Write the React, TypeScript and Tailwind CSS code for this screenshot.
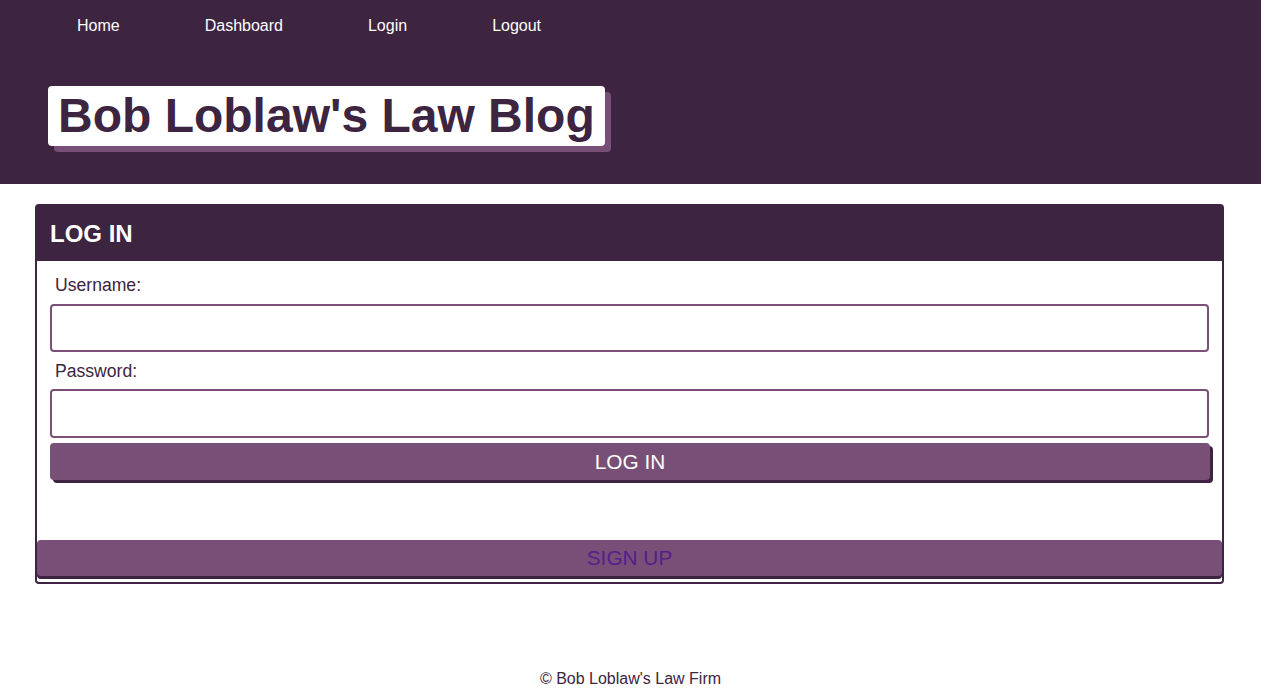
import { useState } from 'react';

export default function App() {
  const [username, setUsername] = useState('');
  const [password, setPassword] = useState('');

  return (
    <div className="min-h-screen bg-white flex flex-col font-['Liberation_Sans',Arial,sans-serif] text-[#3d2440]">
      <header className="bg-[#3d2440] h-[184px]">
        <nav className="flex gap-[85px] pl-[77px] pt-[17px] text-[16px] leading-[18px] text-white">
          <a href="#">Home</a>
          <a href="#">Dashboard</a>
          <a href="#">Login</a>
          <a href="#">Logout</a>
        </nav>
        <div className="pl-[48px] pt-[51px]">
          <h1 className="inline-block bg-white rounded-[4px] px-[10px] text-[48px] leading-[60px] font-bold text-[#3d2440] shadow-[6px_6px_0_#784f77]">
            Bob Loblaw's Law Blog
          </h1>
        </div>
      </header>

      <main className="mt-[20px] ml-[35px] mr-[37px] border-2 border-[#3d2440] rounded-[4px] pb-[6px]">
        <div className="bg-[#3d2440] h-[55px] flex items-center px-[13px]">
          <h2 className="text-[24px] font-bold text-white">LOG IN</h2>
        </div>
        <form className="px-[13px] pt-[14px] flex flex-col" onSubmit={(e) => e.preventDefault()}>
          <label className="ml-[5px] text-[17.6px] leading-[20px]">Username:</label>
          <input
            type="text"
            value={username}
            onChange={(e) => setUsername(e.target.value)}
            className="mt-[9px] h-[48px] border-2 border-[#7a4f78] rounded-[4px] px-2 outline-none"
          />
          <label className="ml-[5px] mt-[9px] text-[17.6px] leading-[20px]">Password:</label>
          <input
            type="password"
            value={password}
            onChange={(e) => setPassword(e.target.value)}
            className="mt-[8px] h-[49px] border-2 border-[#7a4f78] rounded-[4px] px-2 outline-none"
          />
          <button
            type="submit"
            className="mt-[5px] h-[37px] mr-[-1px] bg-[#784f77] text-white text-[20.8px] rounded-[4px] shadow-[3px_3px_0_#3d2440]"
          >
            LOG IN
          </button>
        </form>
        <button className="mt-[60px] w-full h-[36px] bg-[#784f77] text-[#54208c] text-[20.8px] rounded-[4px] shadow-[0_3px_0_#3d2440]">
          SIGN UP
        </button>
      </main>

      <footer className="mt-auto pb-[4px] text-center text-[16px] leading-[18px]">
        © Bob Loblaw's Law Firm
      </footer>
    </div>
  );
}
